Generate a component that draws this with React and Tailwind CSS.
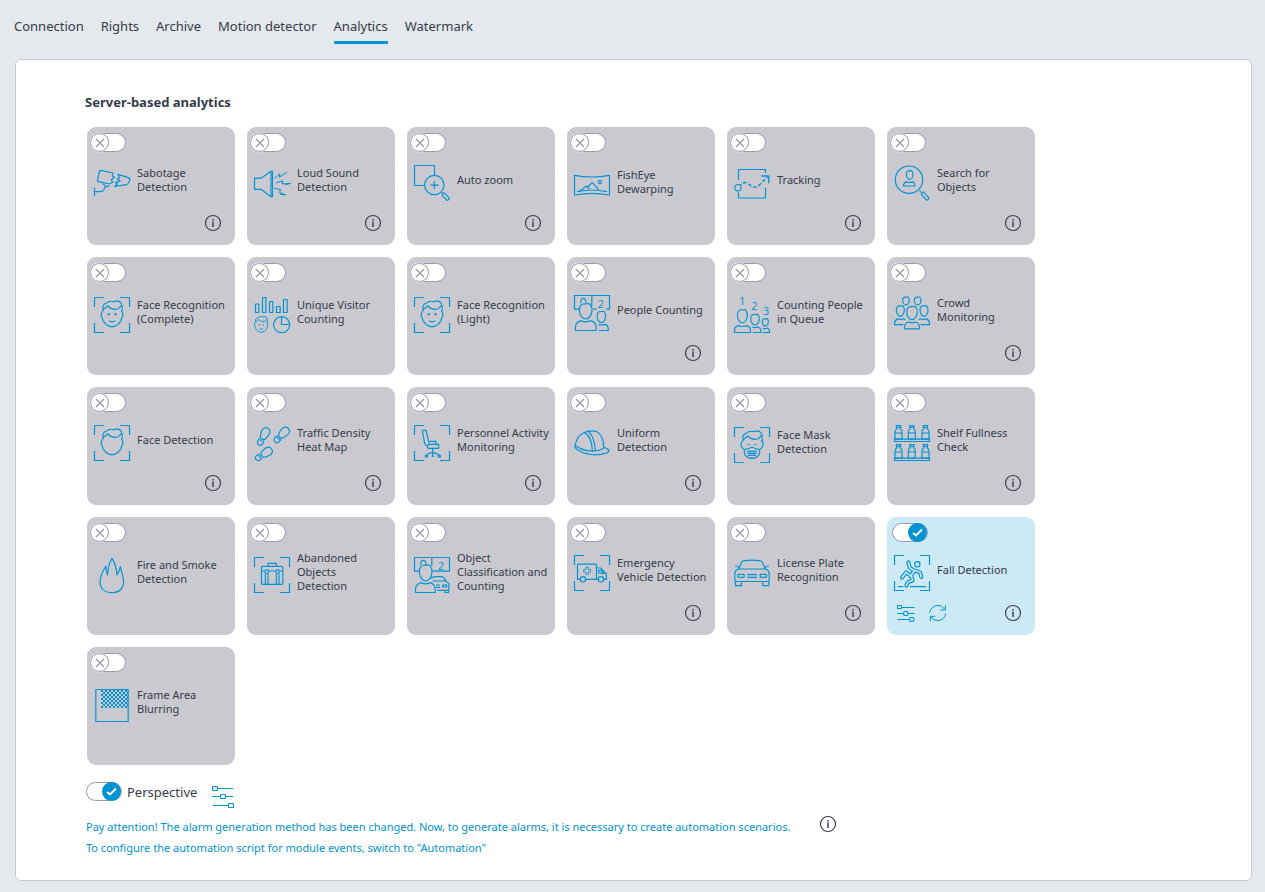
import React from "react";

const CARD = "#cac9cf";
const CARD_ON = "#cce9f5";

function Svg({ children }) {
  return (
    <svg viewBox="0 0 108 108" className="size-9 shrink-0 overflow-visible" fill="none" stroke="#0093d3" strokeWidth="3.500" strokeLinejoin="round" aria-hidden="true">
      {children}
    </svg>
  );
}

const Corners = () => <path d="M1.5 30V1.5H30M78 1.5H106.5V30M106.5 78V106.5H78M30 106.5H1.5V78" />;

const Hair = () => (
  <>
    <path d="M28 42Q22 22 38 18Q44 10 60 14Q74 8 80 17Q88 24 83 44" />
    <path d="M28 38L41 27Q54 40 70 36Q80 33 80 25" />
  </>
);

const Head = () => <path d="M26 42Q18 52 24 61Q27 76 40 85Q54 94 68 85Q81 76 84 61Q90 52 83 42" />;

const Features = () => (
  <>
    <circle cx="44" cy="52" r="3" fill="#0093d3" strokeWidth="1" />
    <circle cx="65" cy="52" r="3" fill="#0093d3" strokeWidth="1" />
    <path d="M46 71Q54 79 63 71" />
  </>
);

function Egg({ x, y, rx, ry }) {
  const px = (k) => x + rx * k;
  const py = (k) => y + ry * k;
  const d = `M${px(-0.95)} ${py(0.05)}C${px(-1.15)} ${py(-0.7)} ${px(-0.6)} ${py(-1.05)} ${px(0)} ${py(-0.95)}C${px(0.3)} ${py(-1.05)} ${px(0.7)} ${py(-1.05)} ${px(0.8)} ${py(-0.75)}C${px(1.05)} ${py(-0.5)} ${px(1.05)} ${py(-0.2)} ${px(0.95)} ${py(0.1)}C${px(0.9)} ${py(0.6)} ${px(0.4)} ${py(1)} ${px(0)} ${py(1)}C${px(-0.4)} ${py(1)} ${px(-0.9)} ${py(0.6)} ${px(-0.95)} ${py(0.05)}Z`;
  return <path d={d} fill={CARD} />;
}

function Digit({ x, y, children }) {
  return (
    <text x={x} y={y} textAnchor="middle" fontSize="34" fill="#0093d3" stroke="none" className="font-['Open_Sans',sans-serif]">
      {children}
    </text>
  );
}

function Foot({ x, y, angle }) {
  return (
    <g transform={`translate(${x} ${y}) rotate(${angle})`}>
      <path d="M-7 16Q-12 4 -12 -6Q-10 -19 1 -19Q13 -18 13 -5Q12 6 8 16Q0 20 -7 16Z" />
      <path d="M-8 22Q0 26 8 22Q11 37 0 38Q-11 37 -8 22Z" />
    </g>
  );
}

function Bottle({ x, y }) {
  return (
    <g transform={`translate(${x} ${y})`}>
      <path d="M5 1.5H18V7H5ZM6 7V12Q1 15 1 21V42H22V21Q22 15 17 12V7M1 24H22" />
    </g>
  );
}

const Magnifier = () => (
  <>
    <path d="M76 76L83 83" />
    <rect x="80" y="88" width="27" height="10" rx="4" transform="rotate(47 93 93)" />
  </>
);

const ICONS = {
  sabotage: (
    <>
      <path d="M20 16L57 24L55 34L61 37L52 44L56 52L46 57L13 50Q9 48 11 42L16 20Q17 16 20 16Z" />
      <path d="M72 28L103 38Q109 40 107 46Q105 55 98 59L62 64L70 57L64 52L79 48L70 43L76 39Z" />
      <path d="M26 56L36 65L46 63M34 65L29 75Q26 80 20 80H2M1.5 68V93" />
    </>
  ),
  sound: (
    <>
      <path d="M1.5 39.5H21L51 19H55.5V95H51L21 73H1.5ZM51 19V95" />
      <path d="M61 41L78 26L76 37L99 21M66 53L87 48L84 57L109 55L94 60M62 70L80 74L76 82L96 90L78 88" strokeWidth="3" />
    </>
  ),
  zoom: (
    <>
      <path d="M32 61.5H1.5V1.5H61.5V31" />
      <circle cx="61" cy="60" r="29" />
      <path d="M61 48V73M49 60.5H74M82 82L87 87" />
      <rect x="82" y="91" width="25" height="10" rx="4" transform="rotate(47 96 96)" />
    </>
  ),
  fisheye: (
    <>
      <path d="M1.5 25Q54 35 106.5 25V84Q54 74 1.5 84Z" />
      <path d="M9 74Q54 64 99 74M14 72Q24 70 32 61L38 57L46 66M41 60L52 49Q55 46 58 50L74 68" />
      <circle cx="78" cy="45" r="5" />
    </>
  ),
  tracking: (
    <>
      <path d="M13.5 45V13.5H94.5V24M13.5 82V99H94.5V68" />
      <circle cx="12" cy="68" r="9.5" />
      <path d="M19 60L23 57" />
      <path d="M27 54Q36 50 44 57L54 64Q64 70 74 62L101 35" strokeWidth="4.500" strokeDasharray="11 6" />
      <path d="M82 33H104V55" strokeWidth="4" />
    </>
  ),
  search: (
    <>
      <circle cx="45" cy="44" r="41" />
      <Egg x={47} y={30} rx={10} ry={13} />
      <path d="M29 63V59Q30 52 37 50Q46 55 55 50Q61 52 62 59V63Z" />
      <Magnifier />
    </>
  ),
  face: (
    <>
      <Corners />
      <Hair />
      <Head />
      <Features />
    </>
  ),
  faceOutline: (
    <>
      <Corners />
      <Hair />
      <Head />
    </>
  ),
  visitor: (
    <>
      <path d="M4.500 21H14.500V46.500H4.500ZM25.500 1.500H35.500V46.500H25.500ZM46.500 13.500H56.500V46.500H46.500ZM67.500 28.500H78.500V46.500H67.500ZM88.500 7.500H99.500V46.500H88.500Z" />
      <g transform="translate(-12 51) scale(.62)" strokeWidth="4.500">
        <Hair />
        <Head />
        <Features />
      </g>
      <circle cx="83" cy="83" r="24" />
      <path d="M82.500 59V82.500H107" />
    </>
  ),
  people: (
    <>
      <path d="M16 42.500H1.500V1.500H106.500V42.500H96M53.500 2V32M58 42.500H68" />
      <path d="M20 25Q20 10 28 10Q35 10 36 24" />
      <Digit x="80" y="40">2</Digit>
      <Egg x={35} y={49} rx={19} ry={23} />
      <path d="M4.500 106.500V94Q7 80 22 77Q35 84 48 77Q64 80 66.500 94V106.500Z" />
      <Egg x={82} y={66} rx={13} ry={17} />
      <path d="M75 106.500H102.500V98Q101 90 92 88Q82 93 74 88" />
    </>
  ),
  queue: (
    <>
      <Digit x="25" y="25">1</Digit>
      <Digit x="61" y="39">2</Digit>
      <Digit x="96" y="54">3</Digit>
      <Egg x={25} y={58} rx={15} ry={20} />
      <path d="M1.500 106.500V98Q3 88 14 86Q25 91 36 86Q48 88 49.500 98V106.500Z" />
      <Egg x={63} y={68} rx={13} ry={16} />
      <path d="M56 106.500H80.500V99Q79 92 72 90Q63 94 55 90" />
      <Egg x={94} y={76} rx={9} ry={11} />
      <path d="M86 106.500H106.500V101Q105 96 100 93Q94 96 86 94" />
    </>
  ),
  crowd: (
    <>
      <Egg x={36} y={18} rx={10} ry={12} />
      <Egg x={71} y={18} rx={10} ry={12} />
      <Egg x={19} y={48} rx={12} ry={16} />
      <Egg x={90} y={48} rx={12} ry={16} />
      <path d="M28 89H1.500V84Q3 74 13 71Q19 75 28 71L34 75M80 89H106.500V84Q105 74 96 71Q89 75 80 71L74 75" />
      <Egg x={54} y={54} rx={16} ry={20} />
      <path d="M31.500 101.500V93Q34 84 44 81Q54 86 64 81Q74 84 76.500 93V101.500Z" fill={CARD} />
    </>
  ),
  steps: (
    <>
      <Foot x={32} y={26} angle={27} />
      <Foot x={89} y={23} angle={43} />
      <Foot x={37} y={82} angle={56} />
    </>
  ),
  chair: (
    <>
      <Corners />
      <path d="M25 18Q30 14 36 16L46 58L39 64Q34 60 32 54ZM40 62L46 58H74V70H43Q40 68 39 64M47 49H66V58M56 70V94M37 92Q42 84 56 83Q70 84 76 92" />
      <path d="M34 92H40V96H34ZM73 92H79V96H73ZM53 94H59" />
    </>
  ),
  helmet: (
    <>
      <path d="M4 62Q6 36 28 24Q46 15 66 19Q88 28 90 70" />
      <path d="M4 58Q-1 68 12 76Q52 98 98 84Q106 80 104 74L91 67" />
      <path d="M4 62Q20 74 40 77Q70 82 90 70M30 22Q54 34 55 78M42 18Q62 34 64 78" />
    </>
  ),
  mask: (
    <>
      <Corners />
      <Hair />
      <path d="M27 40Q17 50 24 62L31 68M83 40Q91 50 84 62L77 68" />
      <path d="M31 68Q42 66 54 60Q66 66 77 68V78Q72 94 54 94Q36 94 31 78ZM40 73H68M40 79H68M42 85H66" />
      <path d="M41 53H46M62 53H67" strokeWidth="4" />
    </>
  ),
  shelf: (
    <>
      <Bottle x={2} y={0} />
      <Bottle x={42} y={0} />
      <Bottle x={83} y={0} />
      <path d="M1.500 42.500H106.500V49.500H1.500Z" />
      <Bottle x={2} y={57} />
      <Bottle x={42} y={57} />
      <Bottle x={83} y={57} />
      <path d="M1.500 99.500H106.500V106.500H1.500Z" />
    </>
  ),
  fire: (
    <path d="M54 4Q42 22 41 54Q35 44 36 27Q24 44 20 62Q14 84 26 97Q38 107 54 107Q72 107 82 96Q92 82 87 62Q84 46 79 29Q77 42 69 54Q67 24 54 4Z" />
  ),
  baggage: (
    <>
      <Corners />
      <rect x="22.500" y="28" width="64" height="54" rx="4" />
      <path d="M42 27V19H67V27M23 42H32M44 42H65M77 42H86M34 50V82M42 50V82M67 50V82M75 50V82" />
      <circle cx="38" cy="44" r="5.500" />
      <circle cx="71" cy="44" r="5.500" />
    </>
  ),
  objects: (
    <>
      <path d="M16 42.500H1.500V1.500H106.500V42.500H56M53.500 2V26" />
      <path d="M20 25Q20 10 28 10Q35 10 36 24" />
      <Digit x="81" y="39">2</Digit>
      <path d="M50 64Q56 59 64 59H82Q88 59 91 64L97 74L104.500 80V100H70M56 72H98M66 84H78M66 91H78M86 84H98V90H86ZM93 101V106.500H103.500V99" />
      <Egg x={35} y={48} rx={19} ry={24} />
      <path d="M4.500 106.500V94Q7 81 22 77Q35 84 48 77Q60 80 63.500 94V106.500Z" fill={CARD} />
    </>
  ),
  ambulance: (
    <>
      <Corners />
      <path d="M18 73H10.500V30Q10.500 27.500 13 27.500H64Q67.500 27.500 67.500 30V73H36M67.500 39H80L97 57V73H90M72 73H68M74 54V46L80 46L90 56Z" />
      <circle cx="27" cy="73" r="8" />
      <circle cx="81" cy="73" r="8" />
      <path d="M36 37H43V44H50V51H43V58H36V51H29V44H36Z" strokeWidth="2.500" />
    </>
  ),
  car: (
    <>
      <path d="M14 42L22 23Q25 18 32 17Q54 14 76 17Q83 18 86 23L94 42M14 42H94M14 42Q3 46 2.500 54V79.500H105.500V54Q105 46 94 42M3 33H9L14 39M105 33H99L94 39M4.500 80V92H22.500V80M86.500 80V92H104.500V80M40 59H69M40 67H69" />
      <rect x="11" y="58" width="20" height="9" rx="4" />
      <rect x="78" y="58" width="20" height="9" rx="4" />
    </>
  ),
  fall: (
    <>
      <Corners />
      <circle cx="70" cy="28" r="8" />
      <g strokeLinecap="round">
        <path d="M43 22L47 38L60 46M60 46L78 52L82 66M60 48L50 64M50 62L36 52L24 68M52 64L56 76L42 82L37 92" strokeWidth="12" />
        <path d="M43 22L47 38L60 46M60 46L78 52L82 66M60 48L50 64M50 62L36 52L24 68M52 64L56 76L42 82L37 92" strokeWidth="5" stroke={CARD_ON} />
      </g>
      <path d="M12 95H28M48 95H96" />
    </>
  ),
  blur: (
    <>
      <defs>
        <pattern id="checks" width="12" height="12" patternUnits="userSpaceOnUse" x="21" y="9">
          <path d="M0 0H6V6H0ZM6 6H12V12H6Z" fill="#0093d3" stroke="none" />
        </pattern>
      </defs>
      <path d="M5.500 7.500H102.500V103.500H5.500Z" />
      <rect x="21" y="9" width="81" height="54" fill="url(#checks)" stroke="none" />
    </>
  ),
};

const MODULES = [
  { icon: "sabotage", lines: ["Sabotage", "Detection"], info: true },
  { icon: "sound", lines: ["Loud Sound", "Detection"], info: true },
  { icon: "zoom", lines: ["Auto zoom"], info: true },
  { icon: "fisheye", lines: ["FishEye", "Dewarping"] },
  { icon: "tracking", lines: ["Tracking"], info: true },
  { icon: "search", lines: ["Search for", "Objects"], info: true },
  { icon: "face", lines: ["Face Recognition", "(Complete)"] },
  { icon: "visitor", lines: ["Unique Visitor", "Counting"] },
  { icon: "face", lines: ["Face Recognition", "(Light)"] },
  { icon: "people", lines: ["People Counting"], info: true },
  { icon: "queue", lines: ["Counting People", "in Queue"] },
  { icon: "crowd", lines: ["Crowd", "Monitoring"], info: true },
  { icon: "faceOutline", lines: ["Face Detection"], info: true },
  { icon: "steps", lines: ["Traffic Density", "Heat Map"], info: true },
  { icon: "chair", lines: ["Personnel Activity", "Monitoring"], info: true },
  { icon: "helmet", lines: ["Uniform", "Detection"], info: true },
  { icon: "mask", lines: ["Face Mask", "Detection"] },
  { icon: "shelf", lines: ["Shelf Fullness", "Check"], info: true },
  { icon: "fire", lines: ["Fire and Smoke", "Detection"] },
  { icon: "baggage", lines: ["Abandoned", "Objects", "Detection"] },
  { icon: "objects", lines: ["Object", "Classification and", "Counting"] },
  { icon: "ambulance", lines: ["Emergency", "Vehicle Detection"], info: true },
  { icon: "car", lines: ["License Plate", "Recognition"], info: true },
  { icon: "fall", lines: ["Fall Detection"], info: true, on: true },
  { icon: "blur", lines: ["Frame Area", "Blurring"] },
];

function Toggle({ id, on }) {
  const [checked, setChecked] = React.useState(Boolean(on));
  return (
    <span className="relative block h-5 w-9 shrink-0">
      <input
        id={id}
        type="checkbox"
        checked={checked}
        onChange={(e) => setChecked(e.target.checked)}
        className="absolute inset-0 z-10 m-0 size-full cursor-pointer opacity-0"
      />
      <svg viewBox="0 0 36 20" className="block h-5 w-9 overflow-visible" fill="none" aria-hidden="true">
        <rect x="0.500" y="0.500" width="35" height="18" rx="9" fill="#fff" stroke="#9a9ba8" />
        {checked ? (
          <>
            <circle cx="25.500" cy="9.500" r="9.500" fill="#0093d3" />
            <path d="M21 10L24 12.500L30 6.500" stroke="#fff" strokeWidth="2" />
          </>
        ) : (
          <>
            <circle cx="9.500" cy="9.500" r="10" fill="#f1f2f5" />
            <circle cx="9.500" cy="9.500" r="9" fill="#fff" stroke="#9a9ba8" />
            <path d="M6 6L14 14M14 6L6 14" stroke="#9a9ba8" strokeWidth="1.300" />
          </>
        )}
      </svg>
    </span>
  );
}

function InfoButton({ label }) {
  return (
    <button type="button" aria-label={label} className="block size-4 shrink-0 cursor-pointer">
      <svg viewBox="0 0 16 16" className="size-4 overflow-visible" fill="none" stroke="#3b4252" aria-hidden="true">
        <circle cx="8" cy="8" r="7.500" strokeWidth="1.200" />
        <path d="M8 6.500V12" strokeWidth="1.500" />
        <path d="M8 4V5.500" strokeWidth="1.500" />
      </svg>
    </button>
  );
}

function CardSettings() {
  return (
    <button type="button" aria-label="Settings" className="block size-[18px] cursor-pointer">
      <svg viewBox="0 0 54 54" className="size-[18px] overflow-visible" fill="none" stroke="#0093d3" strokeWidth="3" aria-hidden="true">
        <path d="M1.500 4.500H13.500V13.500H1.500ZM13.500 10.500H52M1 28.500H20M20.500 22.500H32.500V34.500H20.500ZM33 28.500H52M1 46.500H38M38.500 40.500H50.500V52H38.500Z" />
      </svg>
    </button>
  );
}

function RefreshButton() {
  return (
    <button type="button" aria-label="Refresh" className="block size-[18px] cursor-pointer">
      <svg viewBox="0 0 54 54" className="size-[18px] overflow-visible" fill="none" stroke="#0093d3" strokeWidth="3" aria-hidden="true">
        <path d="M2 26Q6 6 26 4Q40 4 47 16M49 4V18H34M50 29Q46 48 27 50Q14 50 6 39M4 52V37H19" />
      </svg>
    </button>
  );
}

function ModuleCard({ module, id }) {
  const { icon, lines, info, on } = module;
  return (
    <li className={`flex h-[118px] flex-col rounded-[9px] pt-1.5 ${on ? "bg-[#cce9f5]" : "bg-[#cac9cf]"} ${info ? "pb-[13px]" : "pb-[27px]"}`}>
      <div className={`h-[19px] ${on ? "pl-[5px]" : "pl-[3px]"}`}>
        <Toggle id={id} on={on} />
      </div>
      <div className="flex min-h-0 flex-1 items-center gap-[7px] pl-[7px]">
        <Svg>{ICONS[icon]}</Svg>
        <label htmlFor={id} className="cursor-pointer pb-1.5 text-[11px] leading-[14px] whitespace-nowrap">
          {lines.map((line) => (
            <span key={line} className="block">
              {line}
            </span>
          ))}
        </label>
      </div>
      {info && (
        <div className="flex h-[18px] items-center gap-3.5 pr-3.5 pl-2.5">
          {on && <CardSettings />}
          {on && <RefreshButton />}
          <span className="ml-auto">
            <InfoButton label={`About ${lines.join(" ")}`} />
          </span>
        </div>
      )}
    </li>
  );
}

const TABS = ["Connection", "Rights", "Archive", "Motion detector", "Analytics", "Watermark"];

export default function App() {
  return (
    <div className="flex min-h-screen flex-col bg-[#e5e8ed] font-['Noto_Sans','Open_Sans',sans-serif] text-[#343b49]">
      <nav className="flex gap-[17px] pt-4 pl-3.5 text-[13px] leading-5">
        {TABS.map((tab) => (
          <a
            key={tab}
            href="#"
            aria-current={tab === "Analytics" ? "page" : undefined}
            className={`border-b-[3px] pb-[5px] ${tab === "Analytics" ? "border-[#0093d3]" : "border-transparent"}`}
          >
            {tab}
          </a>
        ))}
      </nav>
      <main className="mt-[15px] mr-[13px] mb-[11px] ml-[15px] flex-1 rounded-md border border-[#c9cad2] bg-white px-[69px] pt-8 pb-5">
        <h1 className="text-[13px] leading-5 font-bold">Server-based analytics</h1>
        <ul className="mt-[15px] grid grid-cols-[repeat(auto-fill,148px)] gap-3 px-0.5">
          {MODULES.map((module, i) => (
            <ModuleCard key={i} module={module} id={`module-${i}`} />
          ))}
        </ul>
        <div className="mt-[17px] flex items-start px-px">
          <Toggle id="perspective" on />
          <label htmlFor="perspective" className="ml-[5px] cursor-pointer text-[13px] leading-5">
            Perspective
          </label>
          <button type="button" aria-label="Perspective settings" className="mt-1 ml-[15px] block cursor-pointer">
            <svg viewBox="0 0 22 22" className="size-[22px]" fill="none" stroke="#0093d3" aria-hidden="true">
              <path d="M0.500 0.500H5.500V4.500H0.500ZM6 2.500H21M0 10.500H8M8.500 8.500H13.500V12.500H8.500ZM14 10.500H21M1 19.500H16M16.500 17.500H21.500V21.500H16.500Z" />
            </svg>
          </button>
        </div>
        <div className="mt-2 px-px text-[11px] leading-[21px] text-[#0093d3]">
          <div className="flex items-start gap-[30px]">
            <p>Pay attention! The alarm generation method has been changed. Now, to generate alarms, it is necessary to create automation scenarios.</p>
            <InfoButton label="About automation scenarios" />
          </div>
          <p>To configure the automation script for module events, switch to "Automation"</p>
        </div>
      </main>
    </div>
  );
}
